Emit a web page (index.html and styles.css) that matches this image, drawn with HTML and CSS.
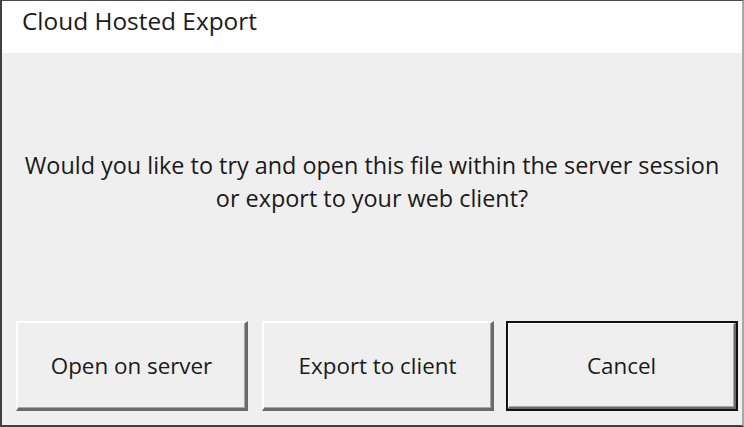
FILE: index.html
```html
<!DOCTYPE html>
<html>
<head>
<meta charset="utf-8">
<link rel="stylesheet" href="styles.css">
</head>
<body>
<div class="window">
  <div class="titlebar">Cloud Hosted Export</div>
  <div class="content">
    <div class="message">
      <p>Would you like to try and open this file within the server session</p>
      <p>or export to your web client?</p>
    </div>
    <div class="buttons">
      <button class="btn">Open on server</button>
      <button class="btn btn-mid">Export to client</button>
      <button class="btn btn-default">Cancel</button>
    </div>
  </div>
</div>
</body>
</html>
```
FILE: styles.css
```css
html, body {
  margin: 0;
  padding: 0;
}
body {
  width: 744px;
  height: 427px;
  overflow: hidden;
  font-family: "Open Sans", "Noto Sans", sans-serif;
  color: #1a1a1a;
}
.window {
  box-sizing: border-box;
  width: 744px;
  height: 427px;
  border-top: 1px solid #4a4a4a;
  border-left: 2px solid #404040;
  border-right: 2px solid #a8a8a8;
  border-bottom: 2px solid #404040;
  display: flex;
  flex-direction: column;
  background: #f0efef;
}
.titlebar {
  height: 52px;
  background: #ffffff;
  font-size: 24.4px;
  line-height: 40px;
  padding-left: 20px;
}
.content {
  flex: 1;
  display: flex;
  flex-direction: column;
}
.message {
  flex: 1;
  display: flex;
  flex-direction: column;
  align-items: center;
  justify-content: center;
  padding-bottom: 10px;
  font-size: 23.4px;
  line-height: 33px;
}
.message p {
  margin: 0;
}
.buttons {
  display: flex;
  padding: 0 0 14px 14px;
}
.btn {
  box-sizing: border-box;
  width: 232px;
  height: 90px;
  margin-right: 14px;
  background: #f0efef;
  font-family: inherit;
  font-size: 22.4px;
  color: #1a1a1a;
  border-style: solid;
  border-width: 2px 3px 3px 2px;
  border-color: #ffffff #6a6a6a #6a6a6a #ffffff;
  box-shadow: inset -1px -1px 0 #a8a8a8;
  padding: 0;
}
.btn-mid {
  margin-right: 12px;
}
.btn-default {
  margin-right: 0;
  outline: 2px solid #111;
  outline-offset: -2px;
  border-width: 3px 4px 4px 3px;
  border-color: #ffffff #6a6a6a #6a6a6a #ffffff;
}
```
